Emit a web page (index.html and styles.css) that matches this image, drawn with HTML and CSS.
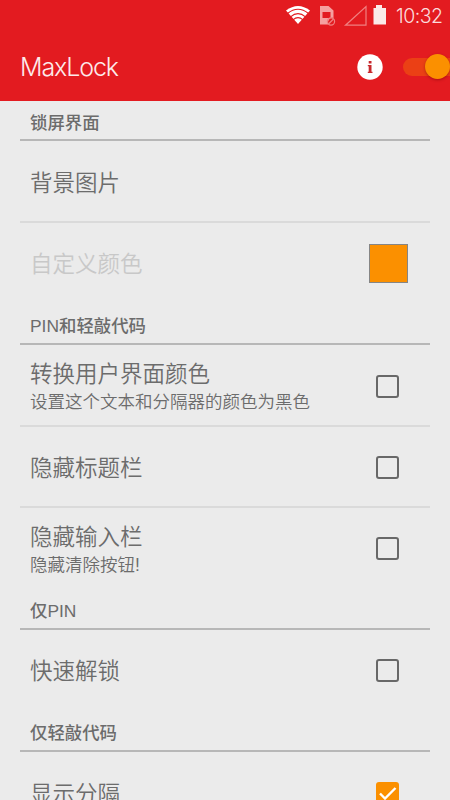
FILE: index.html
```html
<!DOCTYPE html>
<html lang="zh-CN">
<head>
<meta charset="utf-8">
<title>MaxLock</title>
<link rel="stylesheet" href="styles.css">
</head>
<body>
<header class="header">
  <div class="status">
    <svg class="status-icons" width="108" height="30" viewBox="0 0 108 30">
      <path d="M2 10.500Q14 1.500 26 10.500L14 24Z" fill="#fff"/>
      <g fill="none" stroke="#e31b20" stroke-width="1.100">
        <path d="M3.500 13.500Q14 5 24.500 13.500"/>
        <path d="M6.500 16.800Q14 10.500 21.500 16.800"/>
        <path d="M9 19.800Q14 15.500 19 19.800"/>
      </g>
      <path fill="#f5a09f" fill-rule="evenodd" d="M36 6h8.500l5 4.500V18a4.500 4.500 0 0 0-5 6.500H36ZM38.500 12v6h8v-6Z"/>
      <g fill="none" stroke="#f08080" stroke-width="1.200">
        <circle cx="47" cy="21.500" r="3.600"/><path d="M44.500 24l5-5"/>
        <path d="M61.500 25.200H82V6.500Z"/>
      </g>
      <path fill="#fbe9e7" d="M92 5h6v3h4v16.500H89.500V8H92Z"/>
    </svg>
    <span class="clock">10:32</span>
  </div>
  <div class="toolbar">
    <h1 class="title">MaxLock</h1>
    <svg class="info" width="26" height="26" viewBox="0 0 26 26">
      <circle cx="13" cy="13" r="12.700" fill="#fff"/>
      <path fill="#c8282c" d="M11.700 7h2.800v2.400h-2.800ZM10.800 11h3.700v6.800h1v1.200h-4.700v-1.200h.9v-5.600h-.9Z"/>
    </svg>
    <div class="switch"><span class="knob"></span></div>
  </div>
</header>
<main class="list">
  <h2 class="section">锁屏界面</h2>
  <div class="row"><div class="label">背景图片</div></div>
  <div class="row last disabled"><div class="label">自定义颜色</div><span class="swatch"></span></div>
  <h2 class="section">PIN和轻敲代码</h2>
  <div class="row"><div><div class="label">转换用户界面颜色</div><div class="summary">设置这个文本和分隔器的颜色为黑色</div></div><span class="check"></span></div>
  <div class="row"><div class="label">隐藏标题栏</div><span class="check"></span></div>
  <div class="row last"><div><div class="label">隐藏输入栏</div><div class="summary">隐藏清除按钮!</div></div><span class="check"></span></div>
  <h2 class="section">仅PIN</h2>
  <div class="row single last"><div class="label">快速解锁</div><span class="check"></span></div>
  <h2 class="section">仅轻敲代码</h2>
  <div class="row"><div class="label">显示分隔</div><span class="check on"><svg width="23" height="23" viewBox="0 0 23 23"><path d="M4 11.500l5 5L19.500 6" fill="none" stroke="#fff" stroke-width="2.400"/></svg></span></div>
</main>
</body>
</html>
```
FILE: styles.css
```css
* { box-sizing: border-box; }
body {
  margin: 0;
  height: 800px;
  overflow: hidden;
  background: #ebebeb;
  color: #6c6c6c;
  font-family: "Liberation Sans", "Noto Sans CJK SC", sans-serif;
}
.header { height: 101px; background: #e31b20; color: #fff; overflow: hidden; }
.status { height: 32px; display: flex; justify-content: flex-end; padding-right: 6px; }
.status-icons { margin-right: 4px; }
.clock { font: 300 19.500px/32px Inter, sans-serif; width: 48px; white-space: nowrap; color: #fbdcdc; letter-spacing: -.5px; }
.toolbar { height: 69px; display: flex; align-items: center; padding-left: 20px; }
.title { margin: 0; flex: 1; font: 300 25px/30px Inter, sans-serif; color: #fdeaea; letter-spacing: -1.100px; }
.info { margin-right: 20px; }
.switch {
  width: 47px; height: 18px;
  border-radius: 9px 0 0 9px;
  background: #eb4015;
  display: flex; align-items: center; justify-content: flex-end;
}
.knob { width: 25px; height: 25px; border-radius: 50%; background: #fb9000; box-shadow: 0 1px 3px rgba(90, 0, 0, .4); }
.list { padding: 0 20px; }
.section {
  margin: 0; height: 41px; padding: 4px 10px 0;
  border-bottom: 2px solid #b7b7b7;
  font-size: 17.400px; line-height: 36px; font-weight: 500;
}
.section:first-child { height: 40px; }
.row {
  height: 82px; padding: 2px 22px 0 10px;
  border-bottom: 2px solid #dadada;
  display: flex; align-items: center; justify-content: space-between;
}
.row + .row, .single { height: 81px; }
.last { border-bottom-color: transparent; }
.label { font-size: 22.500px; line-height: 28px; font-weight: 350; padding-top: 3px; }
.disabled .label { color: #c8c8c8; }
.summary { font-size: 17.500px; line-height: 25px; font-weight: 350; position: relative; top: 1px; }
.swatch { width: 39px; height: 39px; background: #fb9000; border: 1px solid #858585; }
.check { width: 23px; height: 23px; border: 2px solid #686868; border-radius: 3px; margin-right: 9px; }
.check.on { border: 0; background: #fb9000; }
.check svg { display: block; }
```
